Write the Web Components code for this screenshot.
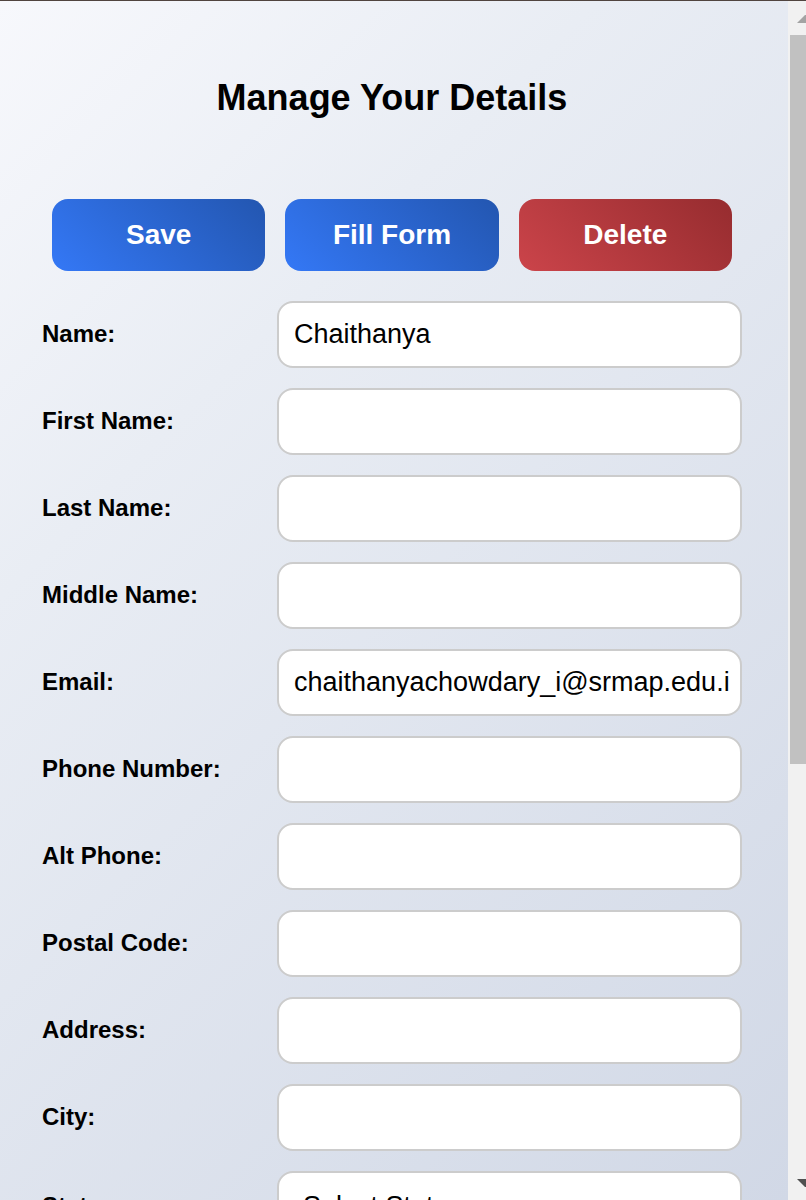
<!DOCTYPE html>
<html lang="en">
<head>
<meta charset="utf-8">
<title>Manage Your Details</title>
<style>
  html, body { height: 100%; }
  body { margin: 0; overflow: hidden; font-family: "Liberation Sans", Arial, sans-serif; color: #000; }
</style>
</head>
<body>
<details-page>
  <details-form>
    <action-button slot="actions">Save</action-button>
    <action-button slot="actions">Fill Form</action-button>
    <action-button slot="actions" kind="danger">Delete</action-button>
    <form-field label="Name:" value="Chaithanya"></form-field>
    <form-field label="First Name:"></form-field>
    <form-field label="Last Name:"></form-field>
    <form-field label="Middle Name:"></form-field>
    <form-field label="Email:" value="chaithanyachowdary_i@srmap.edu.i"></form-field>
    <form-field label="Phone Number:"></form-field>
    <form-field label="Alt Phone:"></form-field>
    <form-field label="Postal Code:"></form-field>
    <form-field label="Address:"></form-field>
    <form-field label="City:"></form-field>
    <select-field label="State:" placeholder="Select State"></select-field>
  </details-form>
  <scroll-rail slot="rail"></scroll-rail>
</details-page>
<script>
  class BaseElement extends HTMLElement {
    constructor() {
      super();
      this.attachShadow({ mode: "open" });
    }
    connectedCallback() {
      this.shadowRoot.innerHTML = this.render();
    }
  }

  customElements.define("details-page", class extends BaseElement {
    render() {
      return `<style>
        :host { display: flex; box-sizing: border-box; height: 100vh; border-top: 1px solid #50443f; }
        main { flex: 1; min-width: 0; overflow: hidden; background: linear-gradient(135deg, #f7f8fc, #e9edf4 30%, #d1d8e6); }
      </style>
      <main><slot></slot></main><slot name="rail"></slot>`;
    }
  });

  customElements.define("details-form", class extends BaseElement {
    render() {
      return `<style>
        :host { display: block; padding: 76px 46px 20px 42px; }
        h1 { margin: 0; font-size: 36px; line-height: 42px; text-align: center; }
        .actions { display: flex; gap: 20px; padding: 80px 10px 30px; }
        .fields { display: flex; flex-direction: column; gap: 20px; }
      </style>
      <h1>Manage Your Details</h1>
      <div class="actions"><slot name="actions"></slot></div>
      <div class="fields"><slot></slot></div>`;
    }
  });

  customElements.define("action-button", class extends BaseElement {
    render() {
      return `<style>
        :host { display: block; flex: 1; --from: #3478f6; --to: #2356b0; }
        :host([kind="danger"]) { --from: #cb444a; --to: #962c2f; }
        button { display: block; width: 100%; height: 72px; padding: 0; border: 0; border-radius: 16px;
          background: linear-gradient(45deg, var(--from), var(--to)); color: #fff;
          font: bold 28px/32px "Liberation Sans", Arial, sans-serif; cursor: pointer; }
      </style>
      <button type="button"><slot></slot></button>`;
    }
  });

  const fieldStyle = `
    :host { display: flex; align-items: center; }
    label { flex: 0 0 235px; padding-bottom: 2px; font-size: 24px; line-height: 28px; font-weight: bold; }
    input, select { flex: 1; min-width: 0; box-sizing: border-box; height: 67px; margin: 0; padding: 0 10px 0 15px;
      border: 2px solid #ccc; border-radius: 16px; background: #fff; color: #000;
      font: 27px "Liberation Sans", Arial, sans-serif; }`;

  customElements.define("form-field", class extends BaseElement {
    render() {
      return `<style>${fieldStyle}</style>
      <label for="control">${this.getAttribute("label")}</label>
      <input id="control" type="text" value="${this.getAttribute("value") || ""}">`;
    }
  });

  customElements.define("select-field", class extends BaseElement {
    render() {
      return `<style>${fieldStyle}
        label { padding-bottom: 0; }
        select { height: 70px; padding: 0 24px; appearance: none; }
      </style>
      <label for="control">${this.getAttribute("label")}</label>
      <select id="control"><option>${this.getAttribute("placeholder")}</option></select>`;
    }
  });

  customElements.define("scroll-rail", class extends BaseElement {
    render() {
      return `<style>
        :host { display: flex; flex-direction: column; flex: 0 0 18px; background: #f1f1f1; }
        svg { display: block; flex: none; }
        .track { flex: 1; padding-left: 2px; }
        .thumb { height: 64.5%; background: #c1c1c1; }
      </style>
      <svg width="18" height="34" viewBox="0 0 18 34"><path d="M9 22 L17 14 H18 V22 Z" fill="#a3a3a3"/></svg>
      <div class="track"><div class="thumb"></div></div>
      <svg width="18" height="34" viewBox="0 0 18 34"><path d="M9 13 H18 V21 H17 Z" fill="#505050"/></svg>`;
    }
  });
</script>
</body>
</html>
